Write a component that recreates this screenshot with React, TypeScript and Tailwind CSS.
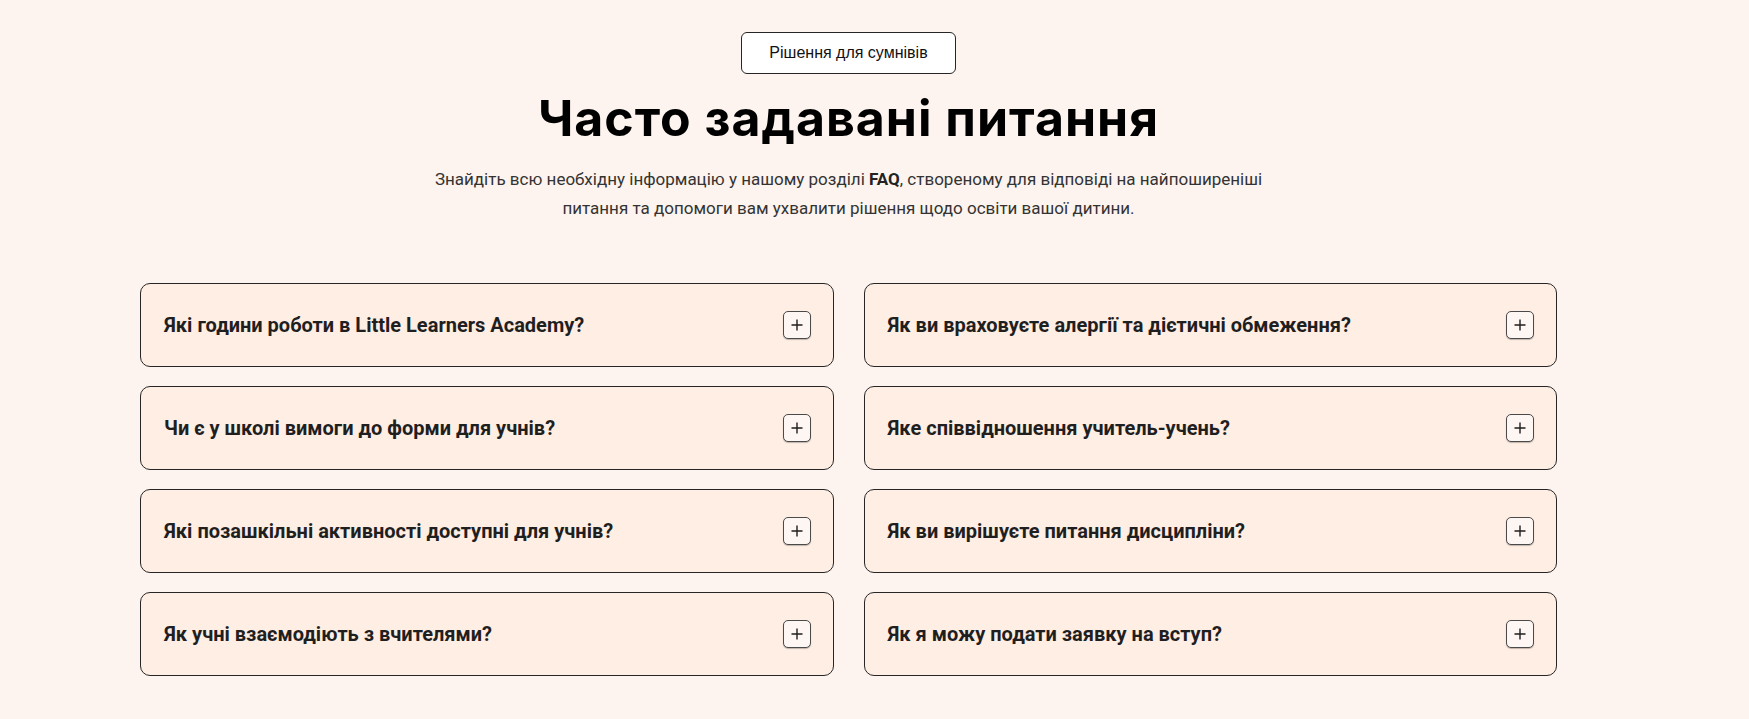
const questions: [string, string][] = [
  ["Які години роботи в Little Learners Academy?", "Як ви враховуєте алергії та дієтичні обмеження?"],
  ["Чи є у школі вимоги до форми для учнів?", "Яке співвідношення учитель-учень?"],
  ["Які позашкільні активності доступні для учнів?", "Як ви вирішуєте питання дисципліни?"],
  ["Як учні взаємодіють з вчителями?", "Як я можу подати заявку на вступ?"],
];

function PlusBox() {
  return (
    <span className="flex h-[28px] w-[28px] shrink-0 items-center justify-center rounded-[5px] border border-[#4a4a4a] bg-[#fdf6f2] shadow-[0_1px_1px_rgba(0,0,0,0.25)]">
      <svg width="14" height="14" viewBox="0 0 14 14" fill="none">
        <path d="M7 1.5v11M1.5 7h11" stroke="#1f1f1f" strokeWidth="1.4" />
      </svg>
    </span>
  );
}

function FaqCard({ text }: { text: string }) {
  return (
    <div className="flex h-[84px] items-center justify-between rounded-[10px] border border-[#262626] bg-[#ffeee4] pl-[23px] pr-[22px]">
      <span className="font-['Roboto',sans-serif] text-[20px] font-bold text-[#1f1f1f]">{text}</span>
      <PlusBox />
    </div>
  );
}

export default function App() {
  // rows go left → right, so flatten pairs in order
  const ordered = questions.flat();

  return (
    <main className="min-h-screen bg-[#fdf4ef] pb-[45px] pl-[140px] pr-[192px] pt-[32px]">
      <div className="flex flex-col items-center">
        <button className="h-[42px] w-[215px] rounded-[6px] border border-[#262626] bg-white font-['Liberation_Sans',sans-serif] text-[16px] text-[#111]">
          Рішення для сумнівів
        </button>
        <h1 className="mt-[14px] font-['Inter',sans-serif] text-[50px] font-bold leading-[60px] tracking-[0.02em] text-black">
          Часто задавані питання
        </h1>
        <p className="mt-[17px] max-w-[840px] text-center font-['Roboto',sans-serif] text-[17px] leading-[29px] text-[#333]">
          Знайдіть всю необхідну інформацію у нашому розділі <span className="font-bold text-[#222]">FAQ</span>, створеному для відповіді на найпоширеніші питання та допомоги вам ухвалити рішення щодо освіти вашої дитини.
        </p>
      </div>

      <div className="mt-[60px] grid grid-cols-2 gap-x-[30px] gap-y-[19px]">
        {ordered.map((q) => (
          <FaqCard key={q} text={q} />
        ))}
      </div>
    </main>
  );
}
